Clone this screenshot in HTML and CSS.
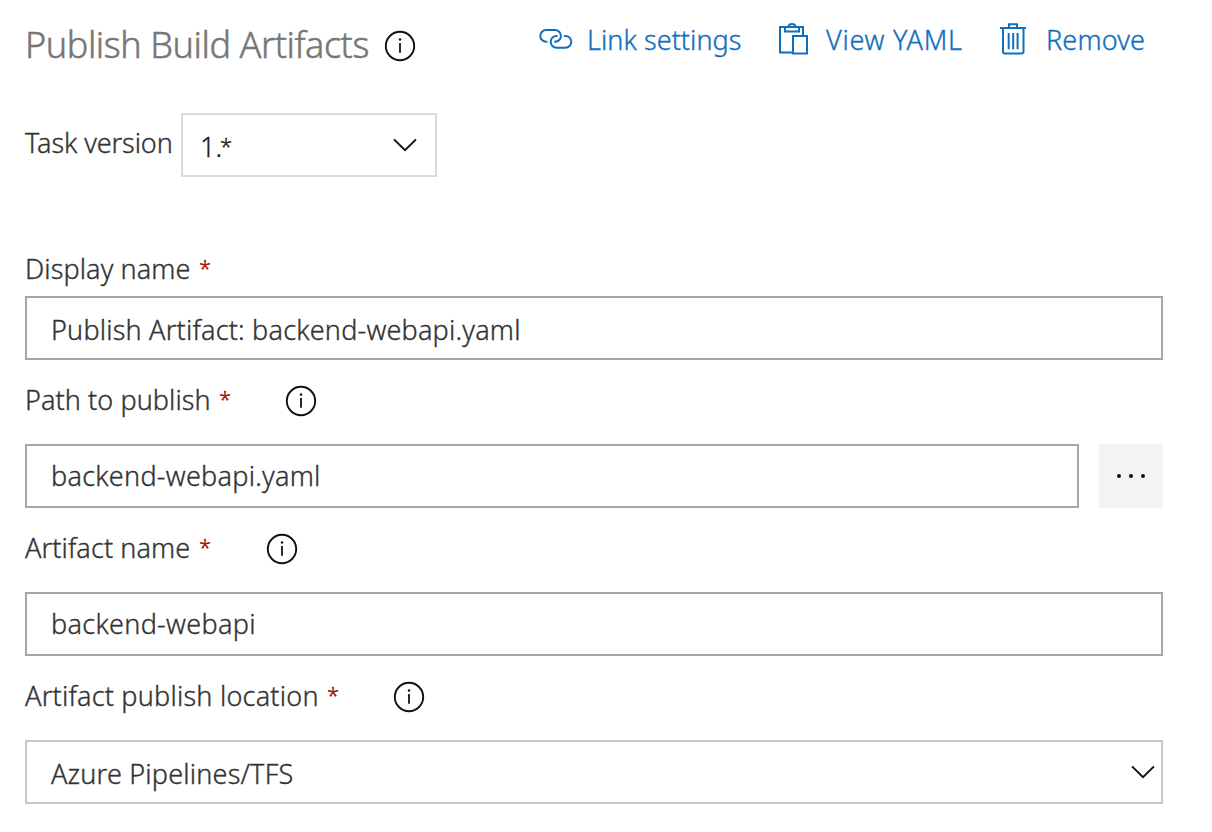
FILE: index.html
```
<!DOCTYPE html>
<html lang="en">
<head>
<meta charset="utf-8">
<title>Publish Build Artifacts</title>
<link rel="stylesheet" href="styles.css">
</head>
<body>
<svg class="defs" width="0" height="0">
  <symbol id="info" viewBox="0 0 32 32">
    <circle cx="16" cy="16" r="14.2" fill="none" stroke="currentColor" stroke-width="1.9"/>
    <path d="M16 13V22.8" stroke="currentColor" stroke-width="1.8"/>
    <circle cx="16" cy="9.6" r="1.25" fill="currentColor"/>
  </symbol>
  <symbol id="chevron" viewBox="0 0 24 14">
    <path d="M1 1.4L12 12.2L23 1.4" fill="none" stroke="currentColor" stroke-width="2"/>
  </symbol>
</svg>
<main class="panel">
  <header class="header">
    <div class="heading">
      <h1 class="title">Publish Build Artifacts</h1>
      <svg class="info"><use href="#info"/></svg>
    </div>
    <nav class="toolbar">
      <a class="action action-link">
        <svg class="icon" width="34" height="22" viewBox="0 0 34 22">
          <path d="M8.4 13.8H7.2A5.9 5.9 0 0 1 7.2 2H16A5.9 5.9 0 0 1 16 13.8H15.2M18.6 7.9H17.6A5.95 5.95 0 0 0 17.6 19.8H26.4A5.95 5.95 0 0 0 26.4 7.9H25"/>
        </svg>
        <span class="text-link">Link settings</span>
      </a>
      <a class="action action-view">
        <svg class="icon" width="32" height="34" viewBox="0 0 32 34">
          <path d="M14 30.4H2V5H25V13M15 14H29V31.6H15ZM7 5V9.4H21V5M7 5H10.6C10.6 1 17.4 1 17.4 5"/>
        </svg>
        <span class="text-view">View YAML</span>
      </a>
      <a class="action action-remove">
        <svg class="icon" width="30" height="34" viewBox="0 0 30 34">
          <path d="M2 6H28M11 6V2.2H19V6M5 6V29.5Q5 31.5 7 31.5H23.5Q25.5 31.5 25.5 29.5V6M10.7 11V27.3M15.2 11V27.3M19.6 11V27.3"/>
        </svg>
        <span class="text-remove">Remove</span>
      </a>
    </nav>
  </header>

  <div class="version">
    <label class="version-label">Task version</label>
    <div class="version-select"><span>1.<span class="star">*</span></span><svg class="chevron"><use href="#chevron"/></svg></div>
  </div>

  <div class="label label-first"><span class="t-display">Display name</span><span class="required">*</span></div>
  <div class="box box-display"><span class="v-display">Publish Artifact: backend-webapi.yaml</span></div>

  <div class="label"><span class="t-path">Path to publish</span><span class="required">*</span><svg class="info"><use href="#info"/></svg></div>
  <div class="path-row">
    <div class="box"><span class="v-path">backend-webapi.yaml</span></div>
    <button class="browse" aria-label="Browse"><i></i><i></i><i></i></button>
  </div>

  <div class="label"><span class="t-name">Artifact name</span><span class="required">*</span><svg class="info"><use href="#info"/></svg></div>
  <div class="box"><span class="v-name">backend-webapi</span></div>

  <div class="label"><span class="t-location">Artifact publish location</span><span class="required">*</span><svg class="info"><use href="#info"/></svg></div>
  <div class="box box-select"><span class="v-location">Azure Pipelines/TFS</span><svg class="chevron"><use href="#chevron"/></svg></div>
</main>
</body>
</html>
```
FILE: styles.css
```
* { box-sizing: border-box; }
body { margin: 0; background: #fff; color: #333; font: 350 27px/40px "Noto Sans", "Open Sans", sans-serif; -webkit-text-stroke: 0.35px currentColor; }
svg { display: block; flex: none; }
.defs { position: absolute; }
.panel { padding: 0 49px 0 25px; height: 832px; overflow: hidden; white-space: nowrap; }
.info { width: 32px; height: 32px; color: #111; }
.chevron { width: 24px; height: 14px; color: #111; }

.header { display: flex; height: 113px; }
.heading { display: flex; align-items: flex-start; width: 514px; padding-top: 25px; }
.title { margin: 0; width: 360px; font-size: 36px; font-weight: 350; line-height: 40px; letter-spacing: -0.44px; color: #767676; -webkit-text-stroke-width: 0.5px; }
.heading .info { margin-top: 5px; margin-left: -0.7px; }
.toolbar { display: flex; padding-top: 20px; color: #106ebe; }
.action { display: flex; height: 40px; }
.icon { fill: none; stroke: #106ebe; stroke-width: 2; }
.action-link { width: 239px; }
.action-link .icon { margin: 8px 14px 0 0; }
.action-view { width: 220px; }
.action-view .icon { margin: 2px 16px 0 0; }
.action-remove .icon { margin: 2px 18px 0 0; }
.text-link { letter-spacing: 0.06px; }
.text-view { letter-spacing: 0.75px; }
.text-remove { letter-spacing: 0.15px; }

.version { display: flex; height: 64px; }
.version-label { width: 156px; padding-top: 10px; letter-spacing: -0.1px; }
.version-select { display: flex; justify-content: space-between; width: 256px; height: 64px; padding: 12px 18px 0 17px; border: 2px solid #dadada; color: #222; }
.version-select .chevron { margin-top: 11px; }
.star { display: inline-block; margin-left: -2px; font-size: 22px; line-height: 20px; transform: translateY(-3px); }

.label { display: flex; height: 84px; padding-top: 20px; }
.label-first { height: 119px; padding-top: 72px; }
.t-display, .t-name { width: 165px; letter-spacing: 0.1px; }
.t-path { width: 185px; letter-spacing: 0.08px; }
.t-location { width: 293px; letter-spacing: 0.22px; }
.required { width: 10px; margin-left: 9px; font-size: 22px; line-height: 36px; color: #a80000; }
.label .info { margin: 5px 0 0 56px; }
.t-name ~ .info { margin-left: 56.5px; }
.box { height: 64px; padding: 10px 24px; border: 2px solid #a6a6a6; }
.v-display { letter-spacing: 0.2px; }
.v-path { letter-spacing: 0.26px; }
.v-name { letter-spacing: 0.3px; }
.v-location { letter-spacing: 0.2px; }
.path-row { display: flex; justify-content: space-between; }
.path-row .box { width: 1054px; }
.browse { display: flex; justify-content: center; align-items: center; gap: 8px; width: 64px; height: 64px; padding: 0; border: 0; background: #f3f3f3; }
.browse i { width: 4px; height: 4px; border-radius: 50%; background: #111; }
.box-display { padding-top: 12px; }
.box-select { display: flex; justify-content: space-between; padding: 12px 6px 0 24px; border-color: #c8c8c8; }
.box-select .chevron { margin-top: 11px; }
```
